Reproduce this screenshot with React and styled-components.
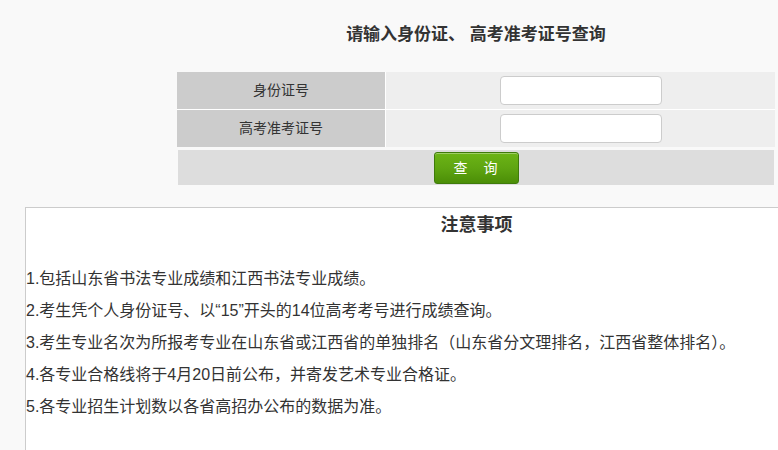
import React from 'react';
import styled, { createGlobalStyle } from 'styled-components';

const GlobalStyle = createGlobalStyle`
  html, body {
    margin: 0;
    padding: 0;
    overflow: hidden;
    background: #f9f9f9;
  }
  body {
    font-family: "Liberation Sans", "Noto Sans CJK SC", sans-serif;
    color: #333;
  }
`;

const Page = styled.div`
  width: 902px;
  margin-left: 25px;
`;

const Heading = styled.h2`
  margin: 0;
  padding-top: 23px;
  height: 24px;
  line-height: 24px;
  font-size: 17px;
  font-weight: bold;
  text-align: center;
  color: #333;
  margin-bottom: 25px;
`;

const FormTable = styled.div`
  width: 598px;
  margin: 0 auto;
  display: grid;
  grid-template-columns: 208px 389px;
  grid-auto-rows: 37px;
  gap: 1px;
  background: #fff;
`;

const LabelCell = styled.div`
  background: #ccc;
  display: flex;
  align-items: center;
  justify-content: center;
  padding-bottom: 3px;
  box-sizing: border-box;
  font-size: 14px;
  color: #333;
`;

const FieldCell = styled.div`
  background: #eee;
  display: flex;
  align-items: center;
  justify-content: center;
`;

const TextInput = styled.input`
  box-sizing: border-box;
  width: 162px;
  height: 29px;
  border: 1px solid #ccc;
  border-radius: 4px;
  background: #fff;
  outline: none;
  padding: 0 6px;
  font-size: 14px;
`;

const ActionBar = styled.div`
  width: 596px;
  height: 35px;
  margin: 3px auto 0;
  background: #ddd;
  display: flex;
  align-items: center;
  justify-content: center;
`;

const SubmitButton = styled.button`
  box-sizing: border-box;
  width: 85px;
  height: 32px;
  border: 1px solid #3f7b0b;
  border-radius: 3px;
  background: linear-gradient(to bottom, #6cb416 0%, #5fa511 50%, #4b8e07 100%);
  box-shadow: inset 0 1px 0 rgba(255, 255, 255, 0.35);
  color: #fff;
  font-family: "Liberation Sans", "Noto Sans CJK SC", sans-serif;
  font-size: 14px;
  letter-spacing: 1px;
  padding: 0 0 2px;
  cursor: pointer;
`;

const Notice = styled.div`
  box-sizing: border-box;
  margin-top: 22px;
  height: 244px;
  border: 1px solid #ccc;
  border-right: none;
  background: #fff;
`;

const NoticeTitle = styled.h3`
  margin: 0;
  line-height: 34px;
  font-size: 18px;
  font-weight: bold;
  text-align: center;
  color: #333;
`;

const NoticeList = styled.div`
  margin-top: 21px;
  p {
    margin: 0;
    font-size: 16px;
    line-height: 32px;
    color: #333;
    white-space: nowrap;
  }
`;

const notes = [
  '1.包括山东省书法专业成绩和江西书法专业成绩。',
  '2.考生凭个人身份证号、以“15”开头的14位高考考号进行成绩查询。',
  '3.考生专业名次为所报考专业在山东省或江西省的单独排名（山东省分文理排名，江西省整体排名）。',
  '4.各专业合格线将于4月20日前公布，并寄发艺术专业合格证。',
  '5.各专业招生计划数以各省高招办公布的数据为准。',
];

const App = () => (
  <>
    <GlobalStyle />
    <Page>
      <Heading>请输入身份证、 高考准考证号查询</Heading>
      <FormTable>
        <LabelCell>身份证号</LabelCell>
        <FieldCell>
          <TextInput type="text" />
        </FieldCell>
        <LabelCell>高考准考证号</LabelCell>
        <FieldCell>
          <TextInput type="text" />
        </FieldCell>
      </FormTable>
      <ActionBar>
        <SubmitButton type="button">查　询</SubmitButton>
      </ActionBar>
      <Notice>
        <NoticeTitle>注意事项</NoticeTitle>
        <NoticeList>
          {notes.map((n) => (
            <p key={n}>{n}</p>
          ))}
        </NoticeList>
      </Notice>
    </Page>
  </>
);

export default App;
